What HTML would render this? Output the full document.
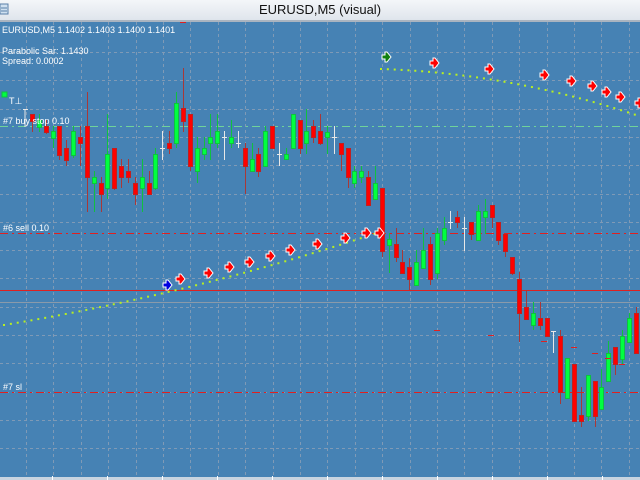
<!DOCTYPE html>
<html><head><meta charset="utf-8"><style>
html,body{margin:0;padding:0;width:640px;height:480px;overflow:hidden;background:#4682b4;font-family:"Liberation Sans",sans-serif}
#title{position:absolute;left:0;top:0;width:640px;height:20px;background:linear-gradient(#f4f6f9,#dfe5ec);border-bottom:2px solid #aab4c0;}
#title span{position:absolute;left:0;width:640px;text-align:center;top:2px;font-size:13px;color:#111}
#chart{position:absolute;left:0;top:22px;}
</style></head><body>
<div id="title"><svg width="10" height="12" style="position:absolute;left:0;top:3px"><rect x="0" y="1" width="8" height="10" fill="#cfe0f0" stroke="#5a7fa8"/><path d="M1 5h6M1 8h6" stroke="#5a7fa8"/></svg><span>EURUSD,M5 (visual)</span></div>
<svg id="chart" width="640" height="458" viewBox="0 22 640 458" xmlns="http://www.w3.org/2000/svg"></svg>
<script>
var s='';
function add(x){s+=x;}
for(var i=0;i<24;i++){var x=Math.round(26+i*27.4)+0.5;add('<line x1="'+x+'" y1="22" x2="'+x+'" y2="477" stroke="#7f9ab6" stroke-dasharray="3,3" stroke-width="1"/>');}
for(var j=0;j<16;j++){var y=Math.round(52+j*28.3)+0.5;add('<line x1="0" y1="'+y+'" x2="640" y2="'+y+'" stroke="#7f9ab6" stroke-dasharray="3,3" stroke-width="1"/>');}
add('<line x1="0" y1="126.5" x2="640" y2="126.5" stroke="#6fd39a" stroke-dasharray="8,4,2,4"/>');
add('<line x1="0" y1="233.5" x2="640" y2="233.5" stroke="#e02020" stroke-dasharray="8,4,2,4"/>');
add('<line x1="0" y1="290.5" x2="640" y2="290.5" stroke="#e02020"/>');
add('<line x1="0" y1="302.5" x2="640" y2="302.5" stroke="#8a9aaa"/>');
add('<line x1="0" y1="392.5" x2="640" y2="392.5" stroke="#e02020" stroke-dasharray="8,4,2,4"/>');
var C=[['r',114,121,114,132],['g',120,127,114,132],['r',126,132,120,134],['g',131,138,126,148],['r',126,155,126,160],['r',148,160,140,166],['g',131,155,126,158],['r',137,143,126,166],['r',126,177,92,212],['g',177,183,171,212],['r',183,194,177,212],['g',154,188,114,199],['r',148,188,148,190],['r',166,177,159,188],['r',171,177,159,183],['r',183,194,177,205],['g',177,188,159,212],['r',183,194,171,194],['g',154,188,148,190],['w',148,148,131,160],['r',143,148,131,154],['g',103,143,92,148],['r',108,121,68,132],['r',114,166,114,171],['g',148,171,137,183],['g',148,154,137,160],['g',137,143,114,160],['g',131,143,114,148],['w',137,137,131,160],['g',137,143,120,148],['w',143,143,131,148],['r',148,166,143,194],['g',159,171,143,171],['r',154,171,148,177],['g',131,166,126,166],['r',126,148,126,148],['w',154,154,143,166],['g',154,159,148,159],['g',114,148,114,148],['r',120,148,120,154],['g',131,143,109,154],['r',126,137,120,143],['r',131,143,114,145],
['g',132,137,126,154],['w',137,137,126,154],['r',143,154,143,171],['r',148,177,148,188],['g',171,183,166,188],['g',171,177,166,183],['r',177,205,171,205],['g',183,199,166,199],['r',188,251,188,257],['g',239,245,233,273],['r',244,257,228,262],['r',262,273,250,273],['r',267,279,258,290],['g',262,285,250,285],['g',250,268,228,268],['r',244,279,237,285],['g',233,273,228,279],['g',228,240,217,245],['w',222,222,211,229],['r',217,222,211,228],['w',228,228,217,251],['r',222,234,222,240],['g',211,240,205,240],['g',211,217,199,234],['r',205,217,205,228],['r',222,240,222,245],['r',234,251,234,257],['r',257,273,257,275],['r',279,313,272,342],['r',307,319,290,319],['g',313,325,302,330],['r',318,325,302,330],['r',318,336,318,336],['w',331,331,331,353],['r',336,392,330,404],['g',358,398,358,398],['r',364,421,364,421],['r',415,421,387,427],['g',375,416,375,421],['r',381,416,381,427],['g',387,409,369,409],['g',353,381,341,381],['r',347,364,347,375],['g',336,359,330,364],['g',318,342,313,342],['r',313,353,307,353]];
for(var k=0;k<C.length;k++){var c=C[k];var x=Math.round(32+k*6.86);
 var wc=c[0]=='r'?'#a83838':(c[0]=='g'?'#10c040':'#e8e8e8');
 add('<line x1="'+(x+0.5)+'" y1="'+c[3]+'" x2="'+(x+0.5)+'" y2="'+c[4]+'" stroke="'+wc+'"/>');
 if(c[0]=='w'){add('<line x1="'+(x-2)+'" y1="'+(c[1]+0.5)+'" x2="'+(x+3)+'" y2="'+(c[1]+0.5)+'" stroke="#e8e8e8"/>');}
 else{var fc=c[0]=='r'?'#ff0000':'#00ff40';var sc=c[0]=='r'?'#c02020':'#10c040';var h=Math.max(2,c[2]-c[1]);
 add('<rect x="'+(x-1.5)+'" y="'+(c[1]+0.5)+'" width="4" height="'+h+'" fill="'+fc+'" stroke="'+sc+'" stroke-width="1"/>');}
}
[[437,330],[491,335],[544,341],[574,347],[595,353],[608,358],[622,364]].forEach(function(p){add('<line x1="'+(p[0]-3)+'" y1="'+(p[1]+.5)+'" x2="'+(p[0]+3)+'" y2="'+(p[1]+.5)+'" stroke="#e02020"/>');});
for(var x=381;x<640;x+=6.86){var t=(x-381)/255;var y=69+8*t+38*t*t;add('<rect x="'+(x-1)+'" y="'+(y-1)+'" width="2" height="2" fill="#b8f020"/>');}
for(var x=4;x<382;x+=6.86){var t=(x-4)/376;var y=325-62*t-31*t*t;add('<rect x="'+(x-1)+'" y="'+(y-1)+'" width="2" height="2" fill="#b8f020"/>');}
function arr(x,y,col){add('<path d="M'+(x-4)+' '+(y-2)+'h3v-3h2l4 5l-4 5h-2v-3h-3z" fill="'+col+'" stroke="#fff" stroke-width="1"/>');}
arr(386,57,'#108010');
[[434,63],[489,69],[544,75],[571,81],[592,86],[606,92],[620,97],[639,103]].forEach(function(p){arr(p[0],p[1],'#ff0000');});
arr(167,285,'#0000e0');
[[180,279],[208,273],[229,267],[249,262],[270,256],[290,250],[317,244],[345,238],[366,233],[379,233]].forEach(function(p){arr(p[0],p[1],'#ff0000');});
function tx(x,y,t){add('<text x="'+x+'" y="'+y+'" font-family="Liberation Sans, sans-serif" font-size="9" fill="#fff">'+t+'</text>');}
tx(2,33,'EURUSD,M5  1.1402 1.1403 1.1400 1.1401');
tx(2,54,'Parabolic Sar: 1.1430');
tx(2,64,'Spread: 0.0002');
tx(9,104,'T⊥');
add('<rect x="2" y="92" width="5" height="5" fill="#00ff40" stroke="#10c040"/>');
add('<line x1="25" y1="109" x2="25" y2="127" stroke="#e8e8e8"/><line x1="23" y1="109.5" x2="28" y2="109.5" stroke="#e8e8e8"/>');
tx(3,124,'#7 buy stop 0.10');
tx(3,231,'#6 sell 0.10');
tx(3,390,'#7 sl');
add('<rect x="180" y="22" width="6" height="1" fill="#e02020"/>');
add('<rect x="0" y="477" width="640" height="3" fill="#c8d4e0"/>');
for(var i=0;i<12;i++){var x=Math.round(52+i*55)+0.5;add('<line x1="'+x+'" y1="476" x2="'+x+'" y2="480" stroke="#fff"/>');}
document.getElementById('chart').innerHTML=s;
</script>
</body></html>
